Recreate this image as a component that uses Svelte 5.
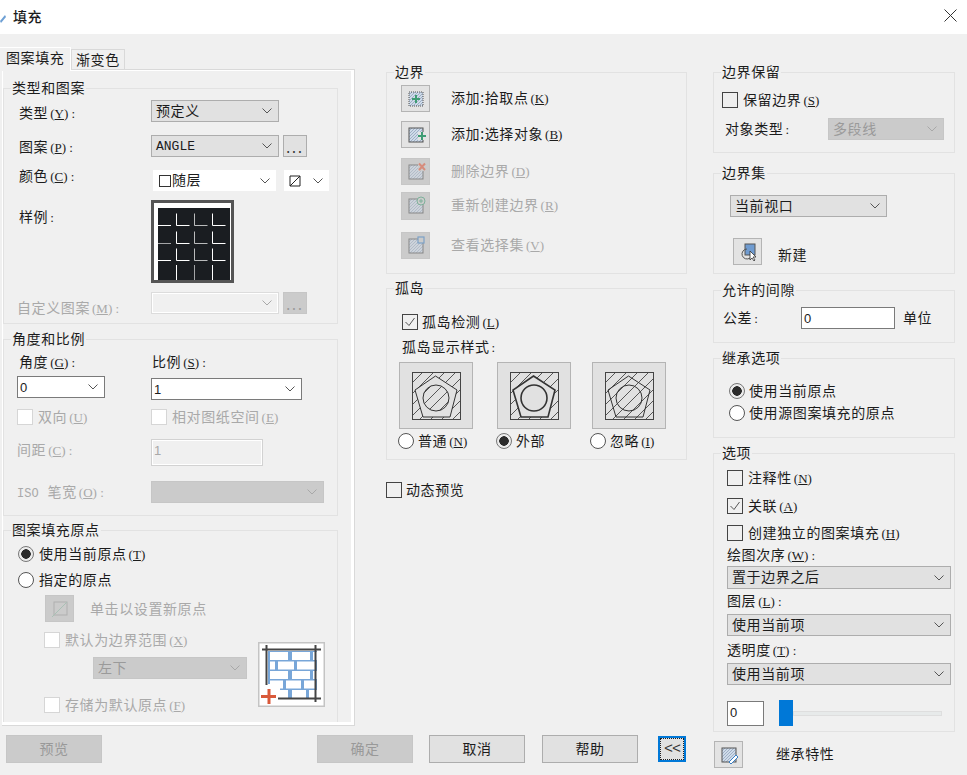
<script>
	const grid = [0, 1, 2];
	const lineX = [25.5, 43.5, 61.5];
	const lineY = [25.5, 43.5, 60.5];
	const islands = [
		{ name: '普通', key: 'N', on: false, pent: true, circle: true, bold: false },
		{ name: '外部', key: '', on: true, pent: true, circle: false, bold: true },
		{ name: '忽略', key: 'I', on: false, pent: false, circle: true, bold: false }
	];
	const boundary = [
		{ text: '添加:拾取点', key: 'K', icon: 'pick', gap: 'mt-5', off: false },
		{ text: '添加:选择对象', key: 'B', icon: 'select', gap: 'mt-9', off: false },
		{ text: '删除边界', key: 'D', icon: 'remove', gap: 'mt-10', off: true },
		{ text: '重新创建边界', key: 'R', icon: 'redo', gap: 'mt-7 tall', off: true },
		{ text: '查看选择集', key: 'V', icon: 'view', gap: 'mt-12', off: true }
	];
	// brick rows of the origin preview: [x, width]
	const bricks = [
		[[12, 18], [34, 18], [55, 4]],
		[[12, 5], [20, 16], [39, 18]],
		[[12, 18], [34, 18], [55, 4]],
		[[12, 13], [28, 15], [46, 12]],
		[[12, 18], [34, 14], [51, 8]]
	];
</script>

{#snippet label(text, key, tail, cls)}
	<span class="lb {cls}">{text}{#if key}<span class="mono">(<u>{key}</u>){tail}</span>{/if}</span>
{/snippet}

{#snippet chevron()}
	<svg class="chev" width="10" height="6" viewBox="0 0 10 6"><path d="M.5.5 5 5 9.5.5" /></svg>
{/snippet}

{#snippet select(text, cls)}
	<div class="select {cls}"><span>{text}</span>{@render chevron()}</div>
{/snippet}

{#snippet check(text, key, on, cls)}
	<div class="opt {cls}">
		<span class="box">
			{#if on}
				<svg width="14" height="14" viewBox="0 0 14 14"><path d="M2.5 7 6 10.5 11.5 3" /></svg>
			{/if}
		</span>
		{@render label(text, key, '', '')}
	</div>
{/snippet}

{#snippet radio(text, key, on, cls)}
	<div class="opt {cls}">
		<span class="dot" class:on></span>
		{@render label(text, key, '', '')}
	</div>
{/snippet}

{#snippet hatchIcon(kind)}
	<svg width="20" height="20" viewBox="0 0 20 20">
		<rect x="3" y="3" width="14" height="14" fill="url(#tiny)" stroke="#555" stroke-dasharray={kind === 'pick' ? '1 1' : 'none'} />
		{#if kind === 'pick'}
			<path d="M10 6v8M6 10h8" stroke="#3f9c74" stroke-width="2" />
		{:else if kind === 'select'}
			<rect x="12" y="7" width="8" height="8" fill="#e3e3e3" />
			<path d="M16 7v8M12 11h8" stroke="#3f9c74" stroke-width="2" />
		{:else if kind === 'remove'}
			<rect x="12" y="1" width="8" height="8" fill="#ccc" />
			<path d="M13 1.500 19 8M19 1.500 13 8" stroke="#e0593c" stroke-width="2" />
		{:else if kind === 'redo'}
			<circle cx="15" cy="5" r="4" fill="#ccc" stroke="#3f9c74" />
			<path d="M15 3v4M13 5h4" stroke="#3f9c74" />
		{:else if kind === 'view'}
			<rect x="12" y="1" width="6" height="6" fill="#ccc" stroke="#3b7fc4" stroke-width="1.200" />
		{:else if kind === 'brush'}
			<path d="M10 17 17 10l2 2-7 7z" fill="#fff" stroke="#3b7fc4" />
		{/if}
	</svg>
{/snippet}

<div class="dialog">
	<svg class="defs">
		<defs>
			<pattern id="tiny" width="3" height="3" patternUnits="userSpaceOnUse">
				<rect width="3" height="3" fill="#cfdbe9" />
				<path d="M0 3 3 0" stroke="#93a5bc" stroke-width=".8" />
			</pattern>
			<pattern id="hatch" width="11" height="11" patternUnits="userSpaceOnUse">
				<rect width="11" height="11" fill="#e1e1e1" />
				<path d="M-1 1 1-1M0 11 11 0M10 12l2-2" stroke="#555" stroke-width="1" />
			</pattern>
		</defs>
	</svg>

	<header class="titlebar">
		<svg class="app-icon" width="6" height="14" viewBox="0 0 6 14"><path d="M0 12 5 6 6 8 1 14z" fill="#6d9fd4" /></svg>
		<span class="title">填充</span>
		<svg class="close" width="13" height="13" viewBox="0 0 13 13"><path d="M.5.5l12 12M12.500.5l-12 12" /></svg>
	</header>

	<main class="columns">
		<div class="col-left">
			<div class="tabs">
				<span class="tab active">图案填充</span>
				<span class="tab">渐变色</span>
			</div>

			<div class="panel">
				<fieldset class="pattern">
					<legend>类型和图案</legend>
					<div class="row mt-4">
						{@render label('类型', 'Y', ' :', 'lc mt-5')}
						{@render select('预定义', 'w-128')}
					</div>
					<div class="row mt-13">
						{@render label('图案', 'P', ' :', 'lc mt-4')}
						<div class="select w-128 latin"><span>ANGLE</span>{@render chevron()}</div>
						<span class="dots">...</span>
					</div>
					<div class="row mt-9">
						{@render label('颜色', 'C', ' :', 'lc mt-2')}
						<div class="select plain color-main mt-4">
							<span class="swatch"></span><span>随层</span>{@render chevron()}
						</div>
						<div class="select plain color-side mt-4">
							<svg class="bg-icon" width="12" height="12" viewBox="0 0 12 12"><path d="M1 1h10v10H1zM1 11 11 1" /></svg>
							{@render chevron()}
						</div>
					</div>
					<div class="row mt-9">
						<span class="lb lc mt-9">样例<span class="mono">:</span></span>
						<svg class="sample" width="83" height="83" viewBox="0 0 83 83">
							<rect x="1.500" y="1.500" width="80" height="80" fill="#fff" stroke="#555" stroke-width="3" />
							<rect x="7" y="8" width="72" height="72" fill="#1a1d21" />
							<g stroke="#fff" fill="none">
								{#each grid as r}
									<path d="M7 {lineY[r]}h13" opacity={r === 1 ? 0.6 : 1} />
									{#each grid as c}
										<path d="M{lineX[c]} {lineY[r] - 12}v12h13" opacity={c === 1 ? 0.7 : 1} />
									{/each}
								{/each}
								{#each grid as c}
									<path d="M{lineX[c]} 65v15" opacity={c === 1 ? 0.6 : 1} />
								{/each}
							</g>
						</svg>
					</div>
					<div class="row mt-9 off">
						{@render label('自定义图案', 'M', ' :', 'lc-wide mt-8')}
						<div class="select w-128 hollow"><span></span>{@render chevron()}</div>
						<span class="dots off-btn">...</span>
					</div>
				</fieldset>

				<fieldset class="angle">
					<legend>角度和比例</legend>
					<div class="row mt-7">
						{@render label('角度', 'G', ' :', 'angle-lb')}
						{@render label('比例', 'S', ' :', '')}
					</div>
					<div class="row mt-6">
						<div class="select combo angle-combo"><span class="num">0</span>{@render chevron()}</div>
						<div class="select combo scale-combo"><span class="num">1</span>{@render chevron()}</div>
					</div>
					<div class="row mt-9 off">
						{@render check('双向', 'U', false, 'bi')}
						{@render check('相对图纸空间', 'E', false, '')}
					</div>
					<div class="row mt-14 off">
						{@render label('间距', 'C', ' :', 'lc-wide mt-3')}
						<div class="input w-112 h-27"><span class="num">1</span></div>
					</div>
					<div class="row mt-15 off">
						<span class="lb lc-wide mt-3"><span class="iso">ISO</span>笔宽<span class="mono">(<u>O</u>) :</span></span>
						{@render select('', 'w-173 disabled')}
					</div>
				</fieldset>

				<fieldset class="origin">
					<legend>图案填充原点</legend>
					{@render radio('使用当前原点', 'T', true, 'origin-radio mt-8')}
					{@render radio('指定的原点', '', false, 'origin-radio mt-10')}
					<div class="row set-row mt-7 off">
						<span class="tool off-btn">
							<svg width="20" height="20" viewBox="0 0 20 20"><rect x="4" y="3" width="13" height="13" fill="none" stroke="#9a9a9a" /><path d="M2 18 17 3" stroke="#8fb8a4" /></svg>
						</span>
						{@render label('单击以设置新原点', '', '', '')}
					</div>
					<div class="row mt-10">
						<div class="origin-opts off">
							{@render check('默认为边界范围', 'X', false, '')}
							{@render select('左下', 'corner disabled mt-9')}
							{@render check('存储为默认原点', 'F', false, 'mt-18')}
						</div>
						<svg class="brick mt-10" width="67" height="65" viewBox="0 0 67 65">
							<rect x=".5" y=".5" width="66" height="64" fill="#fff" stroke="#c4c4c4" stroke-width="2" />
							<rect x="10" y="9" width="49" height="48" fill="#78a6d8" />
							{#each bricks as row, i}
								{#each row as b}
									<rect x={b[0]} y={10 + i * 9.500} width={b[1]} height="8" fill="#fff" />
								{/each}
							{/each}
							<rect x="3" y="42" width="19" height="20" fill="#fff" />
							<path d="M4 7.500h59M8.500 3v40M57.500 3v57M20 56.500h43" stroke="#444" stroke-width="2" fill="none" />
							<path d="M11 47v15M3 54.500h15" stroke="#d9593a" stroke-width="3" />
						</svg>
					</div>
				</fieldset>
			</div>
		</div>

		<div class="col-mid">
			<fieldset class="bounds">
				<legend>边界</legend>
				{#each boundary as item}
					<div class="row bound-row {item.gap}" class:off={item.off}>
						<span class="tool" class:off-btn={item.off}>{@render hatchIcon(item.icon)}</span>
						{@render label(item.text, item.key, '', 'bound-lb')}
					</div>
				{/each}
			</fieldset>

			<fieldset class="island">
				<legend>孤岛</legend>
				{@render check('孤岛检测', 'L', true, 'island-check mt-18')}
				<span class="lb island-label mt-9">孤岛显示样式<span class="mono">:</span></span>
				<div class="island-grid mt-7">
					{#each islands as it}
						<div>
							<div class="island-img">
								<svg width="49" height="48" viewBox="0 0 49 48">
									<rect x=".5" y=".5" width="48" height="47" fill="url(#hatch)" stroke="#444" />
									<path
										d="M23.500 4 45 18 38 45H11L3 18Z"
										fill={it.pent ? '#e1e1e1' : 'none'}
										stroke="#333"
										stroke-width={it.bold ? 1.600 : 1}
									/>
									<circle
										cx="24"
										cy="26"
										r="13"
										fill={it.circle ? 'url(#hatch)' : '#e1e1e1'}
										stroke="#333"
										stroke-width={it.bold ? 1.600 : 1}
									/>
								</svg>
							</div>
							{@render radio(it.name, it.key, it.on, 'island-radio mt-4')}
						</div>
					{/each}
				</div>
			</fieldset>

			{@render check('动态预览', '', false, 'preview-check mt-22')}
		</div>

		<div class="col-right">
			<fieldset class="keep">
				<legend>边界保留</legend>
				{@render check('保留边界', 'S', false, 'keep-check mt-12')}
				<div class="row center mt-10">
					<span class="lb type-lb">对象类型<span class="mono">:</span></span>
					{@render select('多段线', 'w-116 disabled')}
				</div>
			</fieldset>

			<fieldset class="set">
				<legend>边界集</legend>
				{@render select('当前视口', 'w-157 set-select mt-14')}
				<div class="row set-new mt-21">
					<span class="tool">
						<svg width="20" height="20" viewBox="0 0 20 20">
							<rect x="7" y="2" width="10" height="11" fill="#6f9bd0" stroke="#555" />
							<path d="M9 7a5 5 0 1 0 3 9" fill="none" stroke="#555" />
							<path d="M12 9v9l2-2 2 3 1-1-2-3h3z" fill="#fff" stroke="#333" stroke-width=".8" />
						</svg>
					</span>
					{@render label('新建', '', '', 'mt-9')}
				</div>
			</fieldset>

			<fieldset class="gap">
				<legend>允许的间隙</legend>
				<div class="row center mt-9">
					<span class="lb tol-lb">公差<span class="mono">:</span></span>
					<div class="input w-94 h-22"><span class="num">0</span></div>
					<span class="lb unit">单位</span>
				</div>
			</fieldset>

			<fieldset class="inherit">
				<legend>继承选项</legend>
				{@render radio('使用当前原点', '', true, 'inherit-radio mt-17')}
				{@render radio('使用源图案填充的原点', '', false, 'inherit-radio mt-6')}
			</fieldset>

			<fieldset class="options">
				<legend>选项</legend>
				{@render check('注释性', 'N', false, 'opt-check mt-9')}
				{@render check('关联', 'A', true, 'opt-check mt-12')}
				{@render check('创建独立的图案填充', 'H', false, 'opt-check mt-11')}
				{@render label('绘图次序', 'W', ' :', 'opt-lb mt-6')}
				{@render select('置于边界之后', 'wide h-23 mt-3')}
				{@render label('图层', 'L', ' :', 'opt-lb mt-4')}
				{@render select('使用当前项', 'wide mt-5')}
				{@render label('透明度', 'T', ' :', 'opt-lb mt-6')}
				{@render select('使用当前项', 'wide mt-5')}
				<div class="row center slider-row mt-15">
					<div class="input w-37 h-25"><span class="num">0</span></div>
					<span class="thumb"></span>
					<span class="track"></span>
				</div>
			</fieldset>
		</div>
	</main>

	<footer class="footer">
		<button class="btn off-btn preview">预览</button>
		<button class="btn off-btn ok">确定</button>
		<button class="btn cancel">取消</button>
		<button class="btn help">帮助</button>
		<button class="more"><span>&lt;&lt;</span></button>
		<span class="tool inherit-btn">{@render hatchIcon('brush')}</span>
		<span class="lb inherit-lb">继承特性</span>
	</footer>
</div>

<style>
	:global(body) {
		margin: 0;
		background: #f0f0f0;
	}

	.dialog {
		width: 967px;
		height: 775px;
		overflow: hidden;
		background: #f0f0f0;
		color: #1c1c1c;
		font-family: 'Noto Sans CJK SC', sans-serif;
		font-size: 14px;
		line-height: 16px;
		letter-spacing: 0.6px;
	}

	.defs {
		display: block;
		width: 0;
		height: 0;
	}

	.titlebar {
		display: flex;
		align-items: center;
		box-sizing: border-box;
		height: 34px;
		padding-bottom: 3px;
		background: #fff;
	}

	.app-icon {
		margin-right: 7px;
	}

	.title {
		font-weight: 500;
	}

	.close {
		margin-left: auto;
		margin-right: 10px;
		fill: none;
		stroke: #333;
	}

	.columns {
		display: flex;
		height: 701px;
	}

	.col-left {
		width: 354px;
		padding-top: 13px;
	}

	.col-mid {
		width: 301px;
		margin-left: 32px;
		padding-top: 30px;
	}

	.col-right {
		width: 242px;
		margin-left: 26px;
		padding-top: 30px;
	}

	.tabs {
		display: flex;
		align-items: flex-end;
		height: 22px;
		position: relative;
		z-index: 1;
	}

	.tab {
		height: 20px;
		width: 54px;
		box-sizing: border-box;
		border: 1px solid #d9d9d9;
		border-bottom: 0;
		padding-left: 4px;
		line-height: 19px;
	}

	.tab.active {
		width: 71px;
		height: 24px;
		margin-bottom: -2px;
		padding-left: 6px;
		border: 0;
		border-top: 1px solid #fff;
		border-right: 1px solid #fff;
		line-height: 18px;
		background: #f0f0f0;
	}

	.panel {
		box-sizing: border-box;
		width: 353px;
		height: 657px;
		margin-left: 2px;
		padding: 0 0 0 1px;
		overflow: hidden;
		border: 1px solid #d9d9d9;
		border-left: 0;
		box-shadow: inset 0 1px #fff, inset 1px 0 #fff, inset -3px 0 #fff, inset 0 -3px #fff;
	}

	fieldset {
		margin: 0;
		padding: 0;
		min-width: 0;
		box-sizing: border-box;
		border: 1px solid #e2e2e2;
	}

	legend {
		margin-left: 7px;
		padding: 0 1px;
		height: 16px;
		line-height: 14px;
	}

	.pattern {
		width: 335px;
		height: 244px;
		margin-top: 10px;
	}

	.angle {
		width: 335px;
		height: 185px;
		margin-top: 7px;
	}

	.origin {
		width: 335px;
		height: 200px;
		margin-top: 6px;
		border-bottom: 0;
	}

	.bounds {
		height: 210px;
	}

	.island {
		height: 180px;
		margin-top: 6px;
	}

	.keep {
		height: 89px;
	}

	.set {
		height: 109px;
		margin-top: 12px;
	}

	.gap {
		height: 61px;
		margin-top: 8px;
	}

	.inherit {
		height: 88px;
		margin-top: 7px;
	}

	.options {
		height: 287px;
		margin-top: 7px;
	}

	.row {
		display: flex;
		align-items: flex-start;
	}

	.row.center {
		align-items: center;
	}

	.lb {
		display: block;
		height: 16px;
		line-height: 14px;
		white-space: nowrap;
	}

	.mono {
		margin-left: 2px;
		font-family: 'Liberation Serif', serif;
		font-size: 13px;
		letter-spacing: 0;
	}

	.iso {
		margin-right: 9px;
		font-family: 'Liberation Mono', monospace;
		font-size: 12px;
		letter-spacing: 0;
	}

	.off {
		color: #a9a9a9;
	}

	.lc {
		width: 132px;
		margin-left: 15px;
	}

	.lc-wide {
		width: 134px;
		margin-left: 13px;
	}

	.select {
		display: flex;
		align-items: center;
		box-sizing: border-box;
		height: 22px;
		padding: 0 6px 0 4px;
		border: 1px solid #adadad;
		background: #e1e1e1;
		white-space: nowrap;
	}

	.select > span {
		margin-bottom: 3px;
	}

	.chev {
		flex: none;
		margin-left: auto;
		fill: none;
		stroke: #555;
	}

	.select.latin span {
		margin: 2px 0 0;
		font-family: 'Liberation Mono', monospace;
		font-size: 13px;
		letter-spacing: 0;
	}

	.select.plain {
		height: 21px;
		border: 0;
		background: #fff;
	}

	.select.plain > span {
		margin-bottom: 4px;
	}

	.color-main {
		width: 123px;
		margin-left: 2px;
	}

	.color-side {
		width: 45px;
		margin-left: 8px;
	}

	.select.plain > .swatch {
		width: 10px;
		height: 10px;
		margin: 1px 1px 0 2px;
		border: 1px solid #333;
	}

	.bg-icon {
		margin-left: 1px;
		fill: none;
		stroke: #222;
	}

	.hollow {
		background: #f0f0f0;
		border: 1px solid #dcdcdc;
		box-shadow: inset 0 0 0 1px #fff;
	}

	.select.disabled {
		border-color: #c6c6c6;
		background: #cbcbcb;
		color: #9a9a9a;
	}

	.disabled .chev,
	.hollow .chev {
		stroke: #a8a8a8;
	}

	.combo {
		background: #fff;
		border-color: #7a7a7a;
	}

	.num {
		font-family: 'Liberation Sans', sans-serif;
		font-size: 13px;
		letter-spacing: 0;
	}

	.select > .num {
		margin: 2px 0 0;
	}

	.angle-lb {
		width: 133px;
		margin-left: 15px;
	}

	.angle-combo {
		width: 88px;
		margin-left: 13px;
		padding-left: 2px;
	}

	.scale-combo {
		width: 151px;
		margin-left: 46px;
		margin-top: 2px;
		padding-left: 2px;
	}

	.input {
		box-sizing: border-box;
		padding-left: 2px;
		border: 1px solid #7a7a7a;
		background: #fff;
		line-height: 18px;
	}

	.row.off .input {
		border-color: #d2d2d2;
		background: #f0f0f0;
		box-shadow: inset 0 0 0 1px #fff;
	}

	.w-37 { width: 37px; }
	.w-94 { width: 94px; }
	.w-112 { width: 112px; }
	.w-116 { width: 116px; }
	.w-128 { width: 128px; }
	.w-157 { width: 157px; }
	.w-173 { width: 173px; }
	.h-22 { height: 22px; }
	.h-23 { height: 23px; }
	.h-25 { height: 25px; }
	.h-27 { height: 27px; }

	.dots {
		box-sizing: border-box;
		width: 24px;
		height: 22px;
		margin-left: 4px;
		border: 1px solid #adadad;
		background: #e1e1e1;
		color: #333;
		text-align: center;
		line-height: 22px;
		letter-spacing: 2px;
	}

	.dots.off-btn {
		border-color: #c6c6c6;
		background: #cbcbcb;
		color: #999;
	}

	.opt {
		display: flex;
		align-items: center;
		gap: 5px;
		height: 16px;
		white-space: nowrap;
	}

	.box {
		flex: none;
		display: block;
		box-sizing: border-box;
		width: 16px;
		height: 16px;
		border: 1px solid #444;
		background: #f0f0f0;
	}

	.box svg {
		display: block;
		fill: none;
		stroke: #555;
	}

	.off .box {
		border-color: #d6d6d6;
		background: #fff;
	}

	.bi {
		width: 134px;
		margin-left: 13px;
	}

	.dot {
		flex: none;
		box-sizing: border-box;
		width: 16px;
		height: 16px;
		border: 1px solid #555;
		border-radius: 50%;
		background: #fff;
	}

	.dot.on {
		border-color: #777;
		background: radial-gradient(circle, #2b2b2b 0 4.500px, #ececec 5px);
	}

	.tool {
		flex: none;
		display: flex;
		align-items: center;
		justify-content: center;
		box-sizing: border-box;
		width: 29px;
		height: 27px;
		border: 1px solid #b4b4b4;
		background: #e3e3e3;
	}

	.tool.off-btn {
		border-color: #c6c6c6;
		background: #cbcbcb;
	}

	.tool.off-btn svg {
		opacity: 0.55;
	}

	.bound-row {
		align-items: center;
		gap: 21px;
		margin-left: 14px;
	}

	.bound-lb {
		margin-bottom: 2px;
	}

	.tall .tool {
		height: 28px;
	}

	.origin-radio {
		margin-left: 14px;
	}

	.set-row {
		align-items: center;
		gap: 16px;
		margin-left: 41px;
	}

	.origin-opts {
		box-sizing: border-box;
		width: 254px;
		padding-left: 40px;
	}

	.corner {
		width: 154px;
		margin-left: 49px;
	}

	.island-check {
		margin-left: 15px;
		gap: 4px;
	}

	.island-label {
		margin-left: 15px;
	}

	.island-grid {
		display: grid;
		grid-template-columns: 98px 95px 75px;
		margin-left: 12px;
	}

	.island-img {
		display: flex;
		align-items: center;
		justify-content: center;
		box-sizing: border-box;
		width: 74px;
		height: 67px;
		border: 1px solid #b4b4b4;
		background: #e1e1e1;
	}

	.island-radio {
		margin-left: -1px;
		gap: 4px;
	}

	.island-grid > div:last-child .island-radio {
		margin-left: -2px;
	}

	.preview-check {
		gap: 4px;
	}

	.keep-check {
		margin-left: 8px;
	}

	.type-lb {
		width: 103px;
		margin-left: 11px;
	}

	.set-select {
		margin-left: 16px;
	}

	.set-new {
		gap: 16px;
		margin-left: 19px;
	}

	.tol-lb {
		width: 78px;
		margin-left: 9px;
	}

	.unit {
		margin-left: 8px;
	}

	.inherit-radio {
		margin-left: 15px;
		gap: 4px;
	}

	.opt-check {
		margin-left: 13px;
	}

	.opt-lb {
		margin-left: 13px;
	}

	.wide {
		width: 224px;
		margin-left: 13px;
	}

	.slider-row {
		margin-left: 13px;
	}

	.thumb {
		width: 14px;
		height: 26px;
		margin-left: 15px;
		background: #0078d7;
	}

	.track {
		box-sizing: border-box;
		width: 149px;
		height: 5px;
		border: 1px solid #dedede;
		background: #e7eaea;
	}

	.footer {
		display: flex;
		align-items: flex-start;
		height: 40px;
		padding-left: 6px;
	}

	.btn {
		box-sizing: border-box;
		width: 96px;
		height: 28px;
		padding: 0 0 2px;
		border: 1px solid #adadad;
		background: #e1e1e1;
		color: #1c1c1c;
		font: inherit;
		letter-spacing: inherit;
	}

	.btn.off-btn {
		border-color: #c6c6c6;
		background: #cbcbcb;
		color: #999;
	}

	.ok {
		margin-left: 215px;
	}

	.cancel {
		margin-left: 16px;
	}

	.help {
		margin-left: 17px;
	}

	.more {
		box-sizing: border-box;
		width: 28px;
		height: 26px;
		margin: 1px 0 0 20px;
		padding: 2px 0 0;
		border: 2px solid #0078d7;
		outline: 1px dotted #222;
		outline-offset: -3px;
		background: #e1e1e1;
		color: #333;
		font: 15px/20px 'Liberation Mono', monospace;
		letter-spacing: -1px;
	}

	.inherit-btn {
		margin: 6px 0 0 28px;
	}

	.inherit-lb {
		margin: 11px 0 0 33px;
	}

	.mt-2 { margin-top: 2px; }
	.mt-3 { margin-top: 3px; }
	.mt-4 { margin-top: 4px; }
	.mt-5 { margin-top: 5px; }
	.mt-6 { margin-top: 6px; }
	.mt-7 { margin-top: 7px; }
	.mt-8 { margin-top: 8px; }
	.mt-9 { margin-top: 9px; }
	.mt-10 { margin-top: 10px; }
	.mt-11 { margin-top: 11px; }
	.mt-12 { margin-top: 12px; }
	.mt-13 { margin-top: 13px; }
	.mt-14 { margin-top: 14px; }
	.mt-15 { margin-top: 15px; }
	.mt-17 { margin-top: 17px; }
	.mt-18 { margin-top: 18px; }
	.mt-21 { margin-top: 21px; }
	.mt-22 { margin-top: 22px; }
</style>
